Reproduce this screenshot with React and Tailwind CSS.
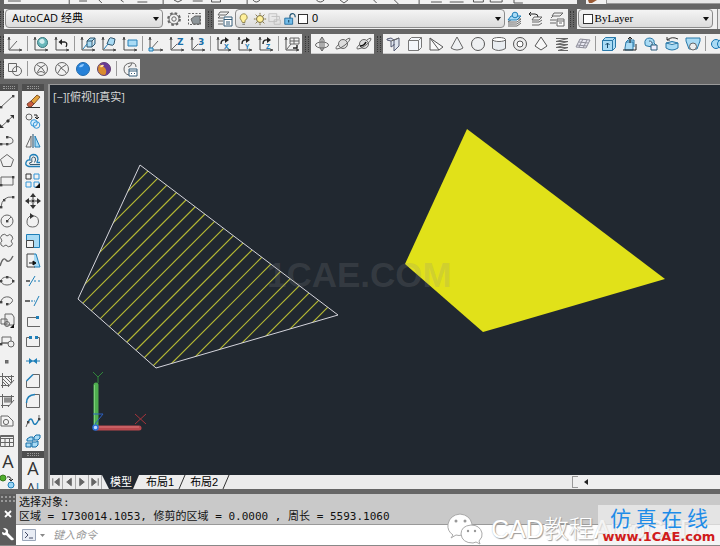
import React, { useState } from "react";

const axes = <path d="M2 2V14H14M2 2v0M1 4l1-3 1 3M12 13l3 1-3 1" stroke="#4a4a4a" />;
const Glyph = ({ children }) => (
  <text x="8" y="9" fontSize="9" fontWeight="bold" fill="#1b6fa8" stroke="none" fontFamily="DejaVu Sans">
    {children}
  </text>
);
const blue = "#1f7fb8";
const sky = "#a9dbf5";
const ends = (points) => points.map(([x, y]) => <rect key={`${x}-${y}`} x={x - 1} y={y - 1} width="2.4" height="2.4" fill="#444" stroke="none" />);

const icons = {
  ucs: <>{axes}<path d="M2 14L10 5" /></>,
  ucsWorld: <>{axes}<circle cx="9.5" cy="6.5" r="5" fill="#69b7bb" stroke="#39777d" /><path d="M6 5q3-4 5-1t-2 4q-2 0-3-3" fill="#d3eef0" stroke="none" /></>,
  ucsPrev: <>{axes}<path d="M6 6h5q3 1 1 5" stroke="#222" strokeWidth="1.3" /><path d="M8 3L4.500 6 8 9z" fill="#222" stroke="none" /></>,
  ucsFace: <>{axes}<path d="M7 5h5v6H7zM7 5l3-3h5l-3 3M15 2v6l-3 3" fill={sky} stroke="#31556b" /><path d="M3 13l4-5" stroke={blue} /></>,
  ucsObject: <>{axes}<path d="M6 8l2-5q1-2 3-1l3 1-1 5q-1 2-3 1z" fill={sky} stroke="#31556b" /><path d="M3 13l4-5" stroke={blue} /></>,
  ucsView: <>{axes}<path d="M6 4h9v6H6z" fill={sky} stroke="#2780b8" /></>,
  ucsOrigin: <>{axes}<path d="M2 14L10 5" /><path d="M1 12h4v3H1z" fill={sky} stroke={blue} /></>,
  ucsZ: <>{axes}<path d="M2 14l6-6" /><Glyph>Z</Glyph></>,
  ucs3: <>{axes}<path d="M2 14l6-6" /><Glyph>3</Glyph></>,
  rotX: <>{axes}<path d="M5 8q0-5 5-4" stroke="#222" strokeWidth="1.4" /><path d="M9 1l4 3-4 3z" fill="#222" stroke="none" /><text x="8" y="13" fontSize="7" fontWeight="bold" fill={blue} stroke="none">X</text></>,
  rotY: <>{axes}<path d="M5 8q0-5 5-4" stroke="#222" strokeWidth="1.4" /><path d="M9 1l4 3-4 3z" fill="#222" stroke="none" /><text x="8" y="13" fontSize="7" fontWeight="bold" fill={blue} stroke="none">Y</text></>,
  rotZ: <>{axes}<path d="M5 8q0-5 5-4" stroke="#222" strokeWidth="1.4" /><path d="M9 1l4 3-4 3z" fill="#222" stroke="none" /><text x="8" y="13" fontSize="7" fontWeight="bold" fill={blue} stroke="none">Z</text></>,
  ucsApply: <>{axes}<path d="M6 2h9v6H6zM6 5h9M10 2v6M3 13l4-5" /><path d="M9 12h4V9" stroke="#222" strokeWidth="1.4" /></>,
  orbitPan: <><path d="M8 1v14M6 4l2-3 2 3M6 12l2 3 2-3" /><ellipse cx="8" cy="9" rx="6.5" ry="3" /><path d="M6 4v8M10 4v8" /></>,
  orbit: <><circle cx="8" cy="8" r="4.5" fill="#ddd" /><path d="M11 4q4-3 4-1t-5 6-8 4 2-5" /></>,
  orbitFree: <><circle cx="8" cy="8" r="4.5" fill="#ddd" /><path d="M11 4q4-3 4-1t-5 6-8 4 2-5" /><path d="M4 10q4 0 6-4" stroke="#111" strokeWidth="1.6" /></>,
  polysolid: <><path d="M1 3l4-1 3 2v5l-3 2V5L1 4zM8 4l5-2v8l-5 5V8" fill="#dfe5ef" stroke="#555a73" /><path d="M5 5l3-1M8 4l5-2" /></>,
  box: <path d="M1.500 4.500l3-3h10v10l-3 3h-10zM1.500 4.500h10v10M11.500 4.500l3-3" fill="#f3f6fa" stroke="#777" />,
  wedge: <path d="M2 2v12h9l4-3zM2 2l9 12" fill="#fafafa" stroke="#555" />,
  cone: <path d="M8 1L2 12q6 4 12 0z" fill="#eef0f2" stroke="#666" />,
  sphere: <circle cx="8" cy="8" r="6.500" fill="#eef0f2" stroke="#555" />,
  cylinder: <><path d="M1.500 3.500v9q6 4 13 0v-9" fill="#e9edf1" stroke="#666" /><ellipse cx="8" cy="3.500" rx="6.500" ry="2" fill="#fff" stroke="#666" /></>,
  torus: <><circle cx="8" cy="8" r="6.500" fill="#eee" stroke="#555" /><circle cx="8" cy="8" r="3" fill="#fff" stroke="#555" /></>,
  pyramid: <path d="M8 1L2 10l6 4 6-4zM8 1v0" fill="#f7f7f7" stroke="#555" />,
  helix: <path d="M2 2.500h12L2 5.500h12L2 8.500h12L2 11.500h12L4 14.500h10" stroke="#666" />,
  planar: <path d="M5 3l10 1-4 8-10-1zM8 3L4 11M12 4l-4 8M4 6l9 1M2 9l10 1" fill="#e9e9f2" stroke="#8d8d99" />,
  extrudeBox: <><path d="M1.500 4.500l3-3h10v10l-3 3h-10zM1.500 4.500h10v10M11.500 4.500l3-3" fill={sky} stroke="#2878a8" /><path d="M6.500 12V7M4.500 9l2-2 2 2" stroke="#174b6c" /></>,
  presspull: <><path d="M3 12l1-6h7v8H3zM4 6l2-2h6v7" fill={sky} stroke="#2878a8" /><path d="M8 7V1M6 3l2-2 2 2M1 14h13M14 8v6" stroke="#222" /></>,
  sweep: <><path d="M2 8q-1-6 5-6 5 1 4 5l2 2-4 2-5-1q-2 0-2-2z" fill={sky} stroke="#2878a8" /><path d="M6 5q4 0 3 4M8 9h6v5H8z" fill="#eef" stroke="#285a78" /></>,
  revolve: <><path d="M2 7q6-3 12 0v5q-6 4-12 0zM2 7q6 3 12 0" fill={sky} stroke="#2878a8" /><path d="M3 4q5-4 11-1M3 1v3h3" stroke="#333" /></>,
  loft: <><path d="M1 2h14v3l-3 8H4L1 5z" fill={sky} stroke="#2878a8" /><circle cx="8" cy="10.500" r="3.500" fill="#eee" /></>,
  union: <><circle cx="5" cy="8" r="4.500" fill={sky} stroke="#1774b0" /><circle cx="11" cy="8" r="4.500" fill={sky} stroke="#1774b0" /></>,

  gear: <><circle cx="8" cy="8" r="5.800" strokeDasharray="2.500 2.050" strokeWidth="2.200" /><circle cx="8" cy="8" r="5" fill="#f3f3f3" /><circle cx="8" cy="8" r="2.200" /></>,
  saveSpace: <><path d="M1.500 2.500h12v11h-12z" strokeDasharray="2 1.500" /><path d="M4 8l4-3h5v8H6z" fill="#8d9599" /></>,
  layerProps: <><path d="M3 1h9L9 4H1zM1 7h5M1 7l2-2M1 10h5M1 13h5" /><path d="M7 6h8v9H7zM7 8.500h8M9 11h4M9 13h4" fill="#fff" stroke="#345c78" /></>,
  layerCurrent: <><path d="M5 8h9l-4 3H1zM1 13h9l4-3M1 15h9l4-3" fill="#fff" /><path d="M4 5h10l-4 4H1z" fill={sky} stroke={blue} /><circle cx="8" cy="4" r="2.800" fill={sky} stroke={blue} /></>,
  layerPrev: <><path d="M6 6h8l-3 3H4zM4 11h7l3-2M4 14h7l3-2" /><path d="M1 3h6q3 0 3 3M3 1L1 3l2 2" stroke="#222" /></>,
  layerStates: <><path d="M5 2h9l-3 3H3zM1 9h6M2 7l2-2M1 12h6" /><path d="M8 8h7v7H8zM8 10h7M10 12h3" fill="#fff" /></>,
  wire2d: <><path d="M1.500 2.500h8v8h-8z" /><circle cx="10" cy="10" r="4.500" /></>,
  wire: <><circle cx="8" cy="8" r="6.500" /><path d="M3.500 3.500Q10 6 12.500 12.500M12.500 3.500Q6 6 3.500 12.500M4.500 12.500q3.500-4 7 0" /></>,
  hidden: <><circle cx="8" cy="8" r="6.500" /><path d="M3.500 3.500Q7 5 8 8M12.500 3.500Q6 6 3.500 12.500M8 8q3 1 4.500 4.500" /></>,
  realistic: <><circle cx="8" cy="8" r="6.500" fill="#2581d8" stroke="#216bae" /><path d="M4 6q1-3 5-3-1 4-5 3" fill="#8cc9ff" stroke="none" /></>,
  conceptual: <><circle cx="8" cy="8" r="6.500" fill="#d98b2f" stroke="#604070" /><path d="M8 1.500q6 0 6.500 6.500Q14 13 9 14.500 12 9 8 6 4 4 4 3 6 1.500 8 1.500" fill="#683b94" stroke="none" /><path d="M4 6q1-3 4-2-1 3-4 2" fill="#ffe3a0" stroke="none" /></>,
  styleManager: <><path d="M7 14Q2 13 2 8t6-6 6 4M6 6q3 0 4-4" /><path d="M7 8h8v7H7zM7 10h8M9 12.500h1M12 12.500h1" fill="#fff" stroke="#345c78" /></>,

  line: <><path d="M1 14L13 3" />{ends([[1, 14], [13, 3]])}</>,
  xline: <><path d="M1 14L13 3" /><path d="M10 2h4v4zM0 11v4h4zM6 8l2-2 2 2-2 2z" fill="#333" stroke="none" /></>,
  polyline: <><path d="M1 11h9q4-1 3-4-1-3-5-3" />{ends([[1, 11], [7, 11], [7, 4]])}</>,
  polygon: <path d="M7 1.500l6.500 5-2.500 7H3L.5 6.500z" />,
  rect: <><path d="M1 4h12v8H1z" />{ends([[1, 12], [13, 4]])}</>,
  arc: <><path d="M1 14q1-11 12-10" />{ends([[1, 14], [4, 7], [13, 4]])}</>,
  circle: <><circle cx="7" cy="8" r="6" /><path d="M7 8l4-4" />{ends([[7, 8]])}</>,
  cloud: <path d="M7 3q3-3 5 0 2 3-1 5 3 3 0 5-3 2-5-1-3 3-5 0-1-3 1-4-3-4 0-6 3-2 5 1z" />,
  spline: <path d="M0 13q3-10 6-6t7-4" strokeWidth="1.400" />,
  ellipse: <><ellipse cx="7" cy="8" rx="6" ry="4" />{ends([[1, 8], [13, 8], [7, 4]])}</>,
  ellipseArc: <><path d="M1 8q2-5 8-4 5 2 3 5-2 3-5 2" />{ends([[1, 9], [7, 11]])}</>,
  insert: <><path d="M5 1h7l2 3v8H5zM1 6h6v5H1z" fill="#eee" /><circle cx="7" cy="11" r="2.500" /><path d="M14 11v4h-4z" fill="#111" stroke="none" /></>,
  block: <><path d="M2 4h9v6H2zM1 10h9" /><circle cx="11" cy="11" r="3" fill="#eee" />{ends([[1, 11]])}</>,
  point: <rect x="5.500" y="7.500" width="2.500" height="2.500" fill="#777" />,
  hatch: <path d="M2.500 0v15M0 3.500h14M11.500 2v8M1 12.500h8M3 6l6 6M3 9l3 3M5 4l6 6M8 4l3 3M14 7l-6 7" />,
  gradient: <><path d="M4 4h7v6H4z" fill="#b6b6b6" stroke="none" /><path d="M2.500 1v14M0 3.500h14M11.500 2v8M1 12.500h8M4 6h7M4 8h7M14 7l-6 7" /></>,
  region: <><path d="M1 3h7l5 5v5H1z" fill="#f4f4f4" /><circle cx="6" cy="9" r="2.600" /></>,
  table: <path d="M.5 2.500h13v11H.5zM.5 5.500h13M.5 9.500h13M5 5v8M9.500 5v8M.5 3.500h13" />,
  addSelected: <><circle cx="3" cy="5" r="3" fill="#4fae2c" stroke="#397a20" /><circle cx="11" cy="12" r="3" fill="#9bd5f5" stroke={blue} /><path d="M7 4q4-1 4 3M9 6l2 2 2-2" stroke="#222" /></>,

  erase: <><path d="M6 8l6-6 3 2-6 7z" fill="#e3a43e" stroke="#85572a" /><path d="M2 11l4-3 3 3-3 3q-3 1-4-3z" fill="#ca5d40" stroke="#7c4635" /><path d="M1 14.500h14" stroke="#333" /></>,
  copy: <><circle cx="4" cy="4" r="3" /><circle cx="9" cy="10" r="3.300" fill="#d7efff" stroke="#3396d8" /><circle cx="11.500" cy="12" r="3.300" stroke="#3396d8" /><path d="M9 2h3v4M10 4l2 2 2-2" stroke="#222" /></>,
  mirror: <><path d="M6 3v11H1z" /><path d="M10 3v11h5z" fill={sky} stroke={blue} /><path d="M8 1v14" stroke="#15486a" /></>,
  offset: <><path d="M15 13.500H4q-4-1-3-4 1-3 4-2.500Q4 2 8 1.500q5 0 5 5-1 2-1 3h3" stroke={blue} strokeWidth="1.300" /><path d="M15 11.500H5q-2-2 2-2.500Q6 4 8.500 4t2 3l-1 2.500" stroke="#395b70" /></>,
  array: <><path d="M1 1h5v5H1z" stroke="#333" /><path d="M9 1h5v5H9zM1 9h5v5H1zM9 9h5v5H9z" stroke="#3396d8" /><path d="M15 10v5h-5z" fill="#111" stroke="none" /></>,
  move: <path d="M8 0l3 4H5zM8 16l-3-4h6zM0 8l4-3v6zM16 8l-4 3V5zM6.500 6.500h3v3h-3zM7.500 4h1v2h-1zM7.500 10h1v2h-1zM4 7.500h2v1H4zM10 7.500h2v1h-2z" fill="#333" stroke="none" />,
  rotate: <><path d="M6 3q7-1 7.500 5 0 6-6 6T2 8q0-3 3-5" /><path d="M5 0l4 3-4 3z" fill="#333" stroke="none" /></>,
  scale: <><path d="M1.500 1.500h13v13h-13z" fill={sky} stroke={blue} /><path d="M1.500 7.500h7v7h-7z" fill="#f2f2f2" stroke="#444" /></>,
  stretch: <><path d="M9 1h2l4 13H9" fill={sky} stroke={blue} /><path d="M9 1H2v13h8" stroke="#444" /><path d="M4 10h5M8 8l3 2-3 2z" fill="#111" stroke="#111" /></>,
  trim: <><path d="M1 8h4" stroke="#222" strokeWidth="1.300" /><path d="M4 13L10 3M9 8h2M13 8h2" stroke={blue} /></>,
  extend: <><path d="M0 8h5" stroke="#222" strokeWidth="1.300" /><path d="M6 8h2M9 8h1M9 13l5-10" stroke={blue} /></>,
  breakPoint: <><path d="M12 4.500H2.500v9H15" /><rect x="11" y="3" width="3" height="3" fill={blue} stroke="none" /></>,
  break: <><path d="M4 4.500H1.500v9h13v-9H12" /><path d="M4 3h3v3H4zM10 3h3v3h-3z" fill={blue} stroke="none" /></>,
  join: <><path d="M1 8h14" stroke={blue} /><path d="M4 5l4 3-4 3zM12 5L8 8l4 3z" fill={blue} stroke="none" /></>,
  chamfer: <><path d="M8 1.500h6.500v13h-13V8" /><path d="M1.500 8L8 1.500" stroke={blue} strokeWidth="1.500" /></>,
  fillet: <><path d="M10 1.500h4.500v13h-13V10" /><path d="M1.500 10q0-8 8.500-8.500" stroke={blue} strokeWidth="1.500" /></>,
  blend: <><path d="M3 9q3-6 5 0t6-3" stroke={blue} strokeWidth="1.400" /><path d="M1 14l2-5M14 6V2" />{ends([[3, 9], [14, 6]])}</>,
  explode: <path d="M2 6l3-2h3v4H2zM9 4l2-2h4v3l-2 2H9zM1 10h5v4H1zM7 9h4l2-1v4l-2 2H7z" fill={sky} stroke="#126ca6" />,

  bulb: <><path d="M4 10q-3-3-1-6 4-4 7 0 2 3-2 6v2H5z" fill="#fff09a" stroke="#887d45" /><path d="M5 14h3" /></>,
  sun: <><circle cx="8" cy="8" r="4" fill="#fff09a" stroke="#665b35" /><path d="M8 1v2M8 13v2M1 8h2M13 8h2M3 3l1.500 1.500M11.500 11.500L13 13M13 3l-1.500 1.500M4.500 11.500L3 13" stroke="#75652d" /></>,
  freeze: <path d="M1 2h9v9H1zM4 5h9v3M7 9h7v5H7z" stroke="#bbb" />,
  lock: <><path d="M2 7h9v7H2z" fill="#73bce8" stroke="#206a9b" /><path d="M8 7V4q1-3 4-2 2 1 2 4M6.500 9v3" stroke="#245673" strokeWidth="1.400" /></>,
};

const Icon = ({ name, className = "size-4" }) => (
  <svg viewBox="0 0 16 16" fill="none" stroke="#666" strokeWidth="1" className={`${className} shrink-0`} aria-hidden="true">
    {icons[name]}
  </svg>
);

const ToolButton = ({ name }) => (
  <button aria-label={name} className="w-[21px] h-5 shrink-0 flex items-center justify-center hover:bg-sky-100">
    <Icon name={name} />
  </button>
);

const Separator = () => <div className="w-[5px] shrink-0 flex justify-center py-0.5"><div className="w-px h-full bg-[#999]" /></div>;

const Grip = ({ className = "w-[9px]" }) => (
  <div className={`${className} shrink-0 flex justify-center py-0.5`}>
    <div className="w-1 border-x border-dotted border-[#383838]" />
  </div>
);

const Group = ({ items }) => (
  <div className="flex h-5 shrink-0 bg-[#f1f1f1] border-b border-[#c8c8c8]">
    {items.map((item, i) => (item === "|" ? <Separator key={i} /> : <ToolButton key={item} name={item} />))}
  </div>
);

const DropDown = ({ label, options, className, textClass, children }) => {
  const [value, setValue] = useState(options[0]);
  return (
    <div className={`${className} relative flex items-center h-[19px] border border-[#8b8b8b] rounded-sm bg-linear-to-b from-[#f4f4f4] to-[#dcdcdc]`}>
      {children}
      <select
        aria-label={label}
        value={value}
        onChange={(e) => setValue(e.target.value)}
        className={`${textClass} flex-1 min-w-0 h-full appearance-none bg-transparent text-black outline-none`}
      >
        {options.map((o) => (
          <option key={o}>{o}</option>
        ))}
      </select>
      <svg viewBox="0 0 6 4" className="w-1.5 h-1 mr-[3px] shrink-0 pointer-events-none">
        <path d="M0 0h6L3 4z" fill="#111" />
      </svg>
    </div>
  );
};

const ucsTools = ["ucs", "|", "ucsWorld", "ucsPrev", "|", "ucsFace", "ucsObject", "ucsView", "|", "ucsOrigin", "ucsZ", "ucs3", "|", "rotX", "rotY", "rotZ", "|", "ucsApply"];
const orbitTools = ["orbitPan", "orbit", "orbitFree"];
const modelTools = ["polysolid", "box", "wedge", "cone", "sphere", "cylinder", "torus", "pyramid", "helix", "planar", "|", "extrudeBox", "presspull", "sweep", "revolve", "loft", "|", "union"];
const styleTools = ["wire2d", "|", "wire", "hidden", "realistic", "conceptual", "|", "styleManager"];
const drawTools = ["line", "xline", "polyline", "polygon", "rect", "arc", "circle", "cloud", "spline", "ellipse", "ellipseArc", "insert", "block", "point", "hatch", "gradient", "region", "table"];
const modifyTools = ["erase", "copy", "mirror", "offset", "array", "move", "rotate", "scale", "stretch", "trim", "extend", "breakPoint", "break", "join", "chamfer", "fillet", "blend", "explode"];

const TopStrip = () => (
  <div className="flex h-1 shrink-0 overflow-hidden">
    <div className="w-1 shrink-0" />
    <div className="grow-[30] basis-0 bg-[#f1f1f1]">
      <svg viewBox="0 0 580 4" className="w-full h-1" preserveAspectRatio="none" fill="none" stroke="#555">
        <path d="M4 1h13M66 0v4M76 1h8M96 0l3 3M118 0l3 2M135 2h10M161 0v4M172 0l4 2 4-2M191 1h10M210 0v2h9V0M246 0v4M252 0q3 4 7 0M316 0q4 4 8 0M340 0l4 3 4-3M374 0l3 3M395 0l4 4M420 0v4M432 2h11M451 2h14M475 0v2h10V0M492 0v2h12V0M516 0v3h9" />
      </svg>
    </div>
    <Grip />
    <div className="grow-[7] basis-0 bg-[#f1f1f1] flex">
      <svg viewBox="0 0 20 4" className="w-5 h-1 shrink-0"><path d="M2 0l9 0-5 3H3z" fill="#9b5b35" /></svg>
      <div className="flex-1 border-b border-l border-[#999] bg-[#e8e8e8]" />
    </div>
  </div>
);

const LayerBar = () => (
  <div className="flex h-5 shrink-0">
    <Grip className="w-1" />
    <div className="flex bg-[#f1f1f1] pl-px shrink-0">
      <DropDown label="工作空间" options={["AutoCAD 经典"]} className="w-[158px]" textClass="pl-1.5 text-[11px] font-['Open_Sans','Noto_Sans_CJK_SC',sans-serif]" />
      <ToolButton name="gear" />
      <ToolButton name="saveSpace" />
    </div>
    <Grip />
    <div className="flex flex-[355] min-w-0 bg-[#f1f1f1]">
      <ToolButton name="layerProps" />
      <DropDown label="图层" options={["0"]} className="flex-1 min-w-0" textClass="pl-1 text-[11px] font-['Liberation_Sans',sans-serif]">
        <div className="flex items-center gap-px pl-0.5">
          <Icon name="bulb" className="size-3.5" />
          <Icon name="sun" className="size-3.5" />
          <Icon name="freeze" className="size-3.5" />
          <Icon name="lock" className="size-3.5" />
          <span className="size-2.5 border border-[#333] bg-white" />
        </div>
      </DropDown>
      <ToolButton name="layerCurrent" />
      <ToolButton name="layerPrev" />
      <ToolButton name="layerStates" />
    </div>
    <Grip />
    <div className="flex flex-[143] min-w-0 bg-[#f1f1f1] pl-px gap-1">
      <DropDown label="颜色" options={["ByLayer"]} className="flex-1 min-w-0" textClass="pl-0.5 text-[11px] font-['Liberation_Serif',serif]">
        <span className="size-2.5 ml-1 border border-[#333] bg-white" />
      </DropDown>
      <div className="w-[3px] border-l border-[#8b8b8b] bg-[#e8e8e8]" />
    </div>
  </div>
);

const SideGrip = () => (
  <div className="h-[7px] shrink-0 bg-[#4e4e4e] flex items-center justify-center">
    <div className="w-3 h-[3px] border-y border-dotted border-[#999]" />
  </div>
);

const SideTools = ({ items }) =>
  items.map((name) => (
    <button key={name} aria-label={name} className="h-5 w-full shrink-0 flex items-center justify-center hover:bg-sky-100">
      <Icon name={name} />
    </button>
  ));

const SideBars = () => (
  <div className="flex gap-1 shrink-0 pr-1 overflow-hidden text-[#333] font-['Open_Sans','Liberation_Sans',sans-serif]">
    <div className="w-[18px] flex flex-col">
      <SideGrip />
      <div className="flex-1 flex flex-col bg-[#f1f1f1] pr-0.5">
        <SideTools items={drawTools} />
        <button className="h-5 shrink-0 text-lg leading-5">A</button>
        <SideTools items={["addSelected"]} />
      </div>
    </div>
    <div className="w-[22px] flex flex-col">
      <SideGrip />
      <div className="flex flex-col bg-[#f1f1f1]">
        <SideTools items={modifyTools} />
      </div>
      <SideGrip />
      <div className="flex-1 flex flex-col bg-[#f1f1f1]">
        <button className="h-5 shrink-0 text-lg leading-5">A</button>
        <button className="h-5 shrink-0 text-sm leading-5">A<span className="text-[#2780b8]">I</span></button>
      </div>
    </div>
  </div>
);

const hatchLines = Array.from({ length: 20 }, (_, i) => Math.round(318 + i * 16.65));

const Drawing = () => (
  <div className="relative flex-1 min-h-0 bg-[#212830] overflow-hidden">
    <svg viewBox="50 85 670 390" className="absolute inset-0 size-full" fill="none">
      <defs>
        <clipPath id="quad">
          <path d="M140 165L338 315 156 368 78 299z" />
        </clipPath>
      </defs>
      <g clipPath="url(#quad)" stroke="#b4b834" strokeWidth="1.2">
        {hatchLines.map((c) => (
          <path key={c} d={`M${c - 400} 401L${c - 100} 101`} />
        ))}
      </g>
      <path d="M140 165L338 315 156 368 78 299z" stroke="#d5d5dc" />
      <path d="M467 129L665 279 483 332 405 264z" fill="#e1e119" />
      <text x="267" y="287" fontSize="35" fontWeight="bold" fill="#8b8b8b" fillOpacity="0.2" fontFamily="Liberation Sans">1CAE.COM</text>
      <path d="M96 427V385" stroke="#4fae4f" strokeWidth="5" strokeLinecap="round" />
      <path d="M94.500 425V385" stroke="#7bcf78" />
      <path d="M97 428h42" stroke="#b9484d" strokeWidth="5" strokeLinecap="round" />
      <path d="M98 427h41" stroke="#d9777b" />
      <path d="M93 372l5 5 5-5M98 377v6" stroke="#31853a" />
      <path d="M135 414l11 10M146 414l-11 10" stroke="#a6343b" />
      <path d="M93 414h10l-8 10" stroke="#2c5fc0" />
      <circle cx="95.500" cy="427.500" r="2.500" fill="#bcd6ff" stroke="#2c6fd8" strokeWidth="1.500" />
    </svg>
    <span className="absolute left-[3px] top-1.5 text-[11px] leading-3 text-[#d8d8d8] font-['Open_Sans','Noto_Sans_CJK_SC',sans-serif]">[−][俯视][真实]</span>
  </div>
);

const Slash = () => (
  <svg viewBox="0 0 8 14" className="w-2 h-3.5 shrink-0" fill="none">
    <path d="M1 14L7 0" stroke="#333" />
  </svg>
);

const navPaths = ["M3 3v8M10 3v8L5 7z", "M9 3v8L4 7z", "M4 3v8l5-4z", "M10 3v8M3 3v8l5-4z"];

const LayoutTabs = () => (
  <div className="flex h-3.5 shrink-0 bg-[#ececec] text-[11px] leading-[14px] text-black font-['Liberation_Sans','Noto_Sans_CJK_SC',sans-serif]">
    {navPaths.map((d) => (
      <button key={d} aria-label="tab scroll" className="w-[13px] h-3.5 border-r border-[#aaa]">
        <svg viewBox="0 0 13 14" className="w-3 h-3.5"><path d={d} fill="#666" stroke="#666" strokeWidth="1" /></svg>
      </button>
    ))}
    <svg viewBox="0 0 8 14" className="w-2 h-3.5 shrink-0"><path d="M0 0h8v14H7z" fill="#212830" /></svg>
    <button className="bg-[#212830] text-white">模型</button>
    <svg viewBox="0 0 8 14" className="w-2 h-3.5 shrink-0"><path d="M0 0h7L1 14H0z" fill="#212830" /></svg>
    <div className="flex gap-1">
      <button className="pl-1.5">布局1</button>
      <Slash />
      <button>布局2</button>
      <Slash />
    </div>
    <div className="flex-[340]" />
    <div className="flex flex-[147] items-center gap-1.5 bg-[#efefef]">
      <div className="w-1.5 h-3 border border-[#999] border-r-0" />
      <svg viewBox="0 0 4 6" className="w-1 h-1.5"><path d="M4 0v6L0 3z" fill="#222" /></svg>
    </div>
  </div>
);

const CommandLine = () => (
  <div className="relative flex shrink-0 border-b border-[#888]">
    <div className="w-4 shrink-0 flex flex-col items-center bg-[#5c5c5c]">
      <div className="w-3.5 h-1.5 mt-0.5 border-y-2 border-dotted border-[#999]" />
      <button aria-label="关闭" className="mt-1 h-4">
        <svg viewBox="0 0 10 10" className="size-2.5"><path d="M2 2l6 6M8 2L2 8" stroke="#fff" strokeWidth="1.800" /></svg>
      </button>
      <button aria-label="自定义" className="mt-1 h-4">
        <svg viewBox="0 0 14 14" className="size-3.5"><path d="M2 1l3 3-1 2-3-1Q1 9 5 8l5 5q2 1 3-1L7 6q1-5-5-5z" fill="#fff" /></svg>
      </button>
    </div>
    <div className="flex-1 min-w-0">
      <div className="h-[31px] pl-[3px] pt-0.5 bg-[#c9c9c9] border-b border-[#999] text-[11px] leading-[14px] text-[#111] whitespace-nowrap overflow-hidden font-['DejaVu_Sans_Mono','Noto_Sans_CJK_SC',monospace]">
        <p>选择对象:</p>
        <p>区域 = 1730014.1053, 修剪的区域 = 0.0000 , 周长 = 5593.1060</p>
      </div>
      <div className="h-5 flex items-center gap-1 pl-1.5 bg-white">
        <button aria-label="最近使用的命令" className="flex items-center gap-1">
          <svg viewBox="0 0 14 12" className="w-3.5 h-3" fill="none"><path d="M.5.500h13v11H.5z" fill="#e9edf5" stroke="#9aa5b8" /><path d="M3 3l3 3-3 3M7 9h4" stroke="#444c66" /></svg>
          <svg viewBox="0 0 5 3" className="w-[5px] h-[3px]"><path d="M0 0h5L2.500 3z" fill="#888" /></svg>
        </button>
        <input aria-label="命令" placeholder="键入命令" className="flex-1 min-w-0 pl-1 text-[11px] italic outline-none placeholder:text-[#999] font-['Liberation_Sans','Noto_Sans_CJK_SC',sans-serif]" />
      </div>
    </div>
    <div className="absolute right-[22px] bottom-0 flex items-center gap-2 pointer-events-none">
      <svg viewBox="0 0 36 32" className="w-9 h-8" fill="#fff" stroke="#aaa">
        <path d="M6 22Q0 18 1 11 3 2 13 1q10 1 12 10 0 8-10 11-3 1-6 0l-5 3z" />
        <path d="M32 28q4-4 3-8-2-8-11-8-10 1-10 9 1 9 12 9l3-1 4 2z" />
        <g fill="#999" stroke="none"><circle cx="9" cy="8" r="1.500" /><circle cx="18" cy="8" r="1.500" /><circle cx="21" cy="18" r="1.200" /><circle cx="28" cy="18" r="1.200" /></g>
      </svg>
      <span className="text-[25px] leading-8 font-light text-white whitespace-nowrap [text-shadow:1px_1px_1px_#999,0_0_1px_#bbb] font-['Liberation_Sans','Noto_Sans_CJK_SC',sans-serif]">CAD教程AutoCAD</span>
    </div>
    <div className="absolute right-0 bottom-0 w-[122px] h-10 bg-[#efefef]/70 text-center whitespace-nowrap">
      <p className="text-[21px] leading-6 text-[#1e8ce8] font-['Noto_Sans_CJK_SC',sans-serif]">仿 真 在 线</p>
      <p className="text-[13px] leading-4 font-bold text-[#d01c1c] font-['DejaVu_Sans',sans-serif]">www.1CAE.com</p>
    </div>
  </div>
);

export default function App() {
  return (
    <div className="h-screen flex flex-col gap-[5px] overflow-hidden bg-[#666]">
      <TopStrip />
      <LayerBar />
      <div className="flex h-5 shrink-0 overflow-hidden">
        <Grip className="w-1" />
        <Group items={ucsTools} />
        <Grip />
        <Group items={orbitTools} />
        <Grip />
        <Group items={modelTools} />
      </div>
      <div className="flex h-5 shrink-0">
        <Grip className="w-1" />
        <Group items={styleTools} />
      </div>
      <div className="flex flex-1 min-h-0">
        <SideBars />
        <div className="flex-1 min-w-0 flex flex-col border-l-2 border-t border-[#999]">
          <Drawing />
          <LayoutTabs />
        </div>
      </div>
      <CommandLine />
    </div>
  );
}
